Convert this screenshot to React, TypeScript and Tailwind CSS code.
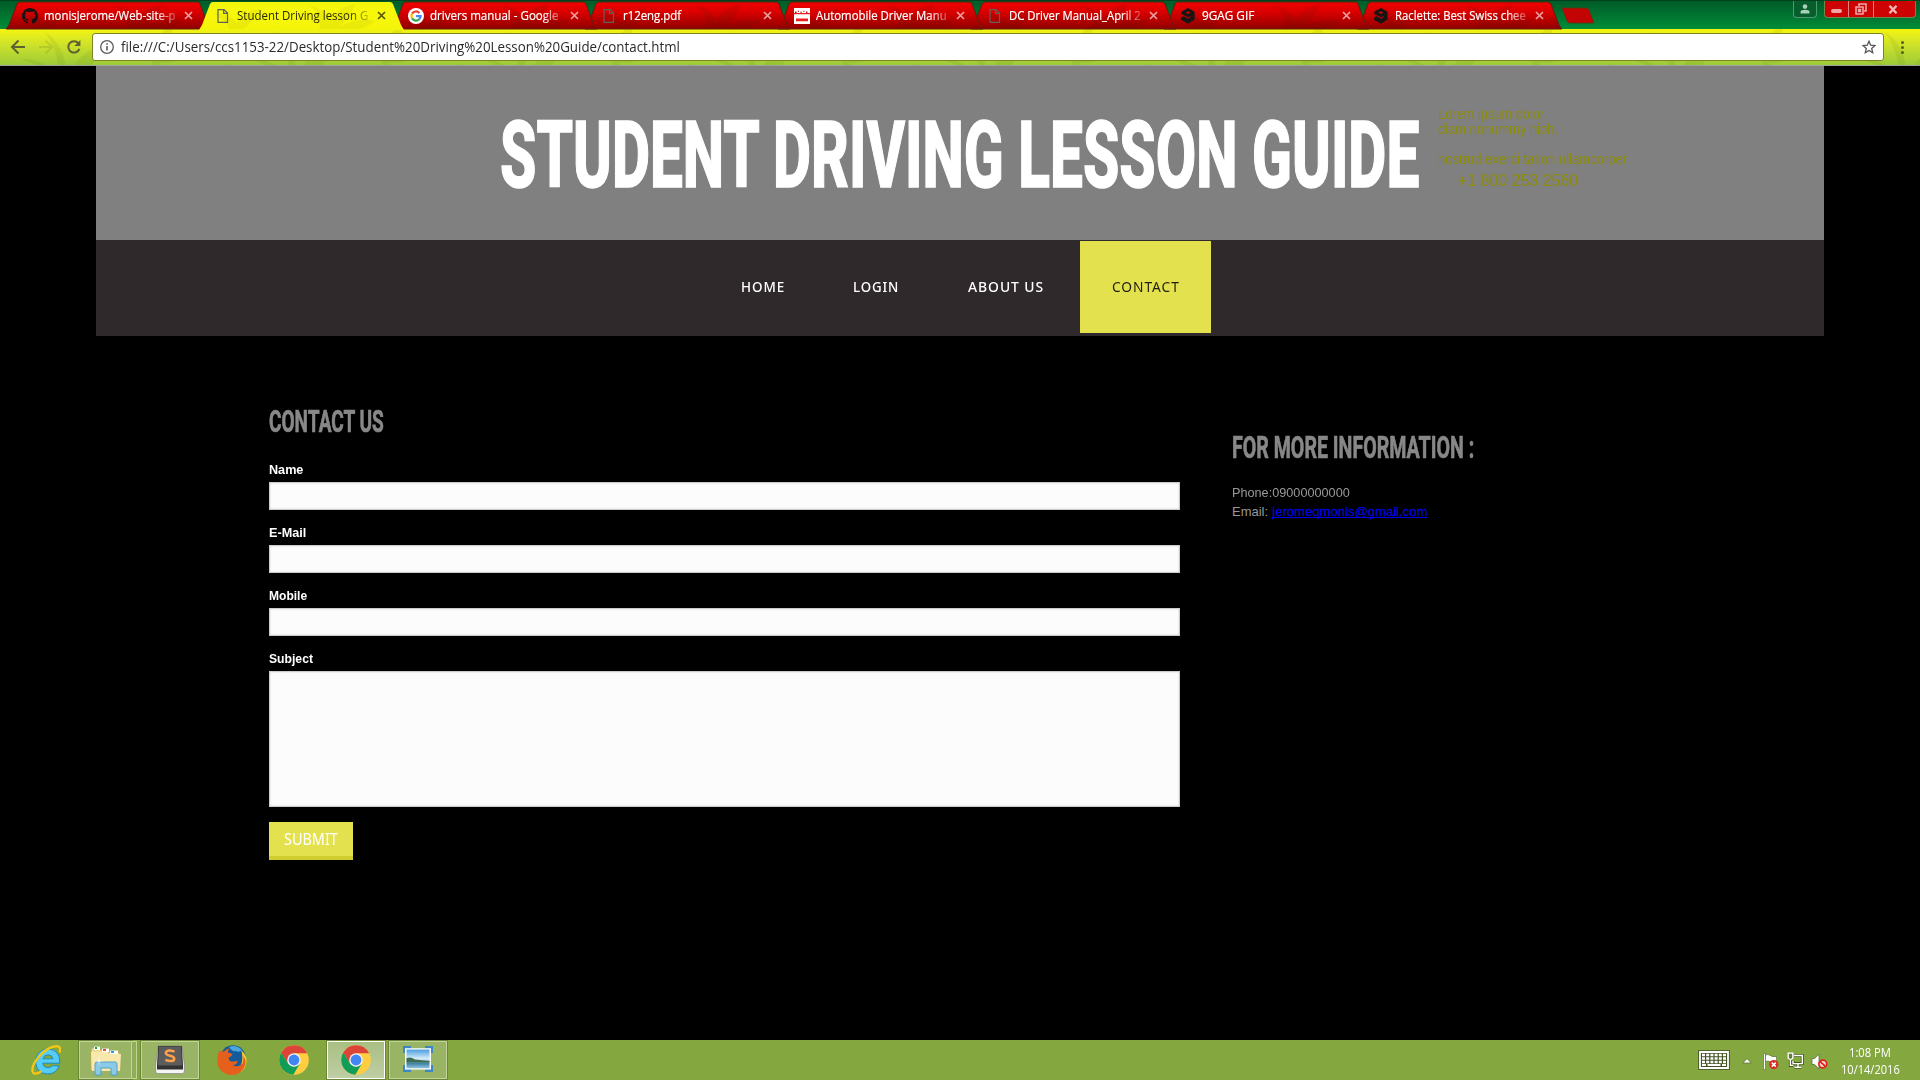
import { useLayoutEffect, useRef, useState, type ReactNode } from "react";

/** Stretches or condenses one line of text to the width of its box. */
function Fit({ className, children }: { className: string; children: ReactNode }) {
  const box = useRef<HTMLSpanElement>(null);
  const text = useRef<HTMLSpanElement>(null);
  const [scale, setScale] = useState(1);
  useLayoutEffect(() => {
    if (box.current && text.current) {
      setScale(box.current.clientWidth / text.current.offsetWidth);
    }
  }, []);
  return (
    <span ref={box} className={`block shrink-0 whitespace-nowrap ${className}`}>
      <span ref={text} className="inline-block origin-left" style={{ transform: `scaleX(${scale})` }}>
        {children}
      </span>
    </span>
  );
}

function LeafTexture({ id, opacity }: { id: string; opacity: number }) {
  return (
    <svg className="pointer-events-none absolute inset-0 h-full w-full" aria-hidden="true">
      <defs>
        <pattern id={id} width="230" height="66" patternUnits="userSpaceOnUse">
          <g fill="#3a4a00" fillOpacity={opacity}>
            <path d="M60 60Q48 38 20 30Q42 28 60 50Q58 20 44 2Q68 18 66 50Q76 24 106 14Q94 40 68 58Q98 46 122 56Q92 68 60 60Z" />
            <path d="M150 30Q142 12 120 4Q144 4 154 20Q158 4 174 -8Q172 10 160 26Q182 14 206 20Q184 34 158 34Q176 44 180 64Q160 52 150 30Z" />
            <path d="M214 66Q204 50 190 44Q208 44 218 56Q220 40 230 34Q230 52 222 66Z" />
          </g>
        </pattern>
      </defs>
      <rect width="100%" height="100%" fill={`url(#${id})`} />
    </svg>
  );
}

function GithubIcon() {
  return (
    <svg viewBox="0 0 16 16" className="h-4 w-4" fill="#1b1013">
      <path d="M8 0C3.58 0 0 3.58 0 8c0 3.54 2.29 6.53 5.47 7.59.4.07.55-.17.55-.38 0-.19-.01-.82-.01-1.49-2.01.37-2.53-.49-2.69-.94-.09-.23-.48-.94-.82-1.13-.28-.15-.68-.52-.01-.53.63-.01 1.08.58 1.23.82.72 1.21 1.87.87 2.33.66.07-.52.28-.87.51-1.07-1.78-.2-3.64-.89-3.64-3.95 0-.87.31-1.59.82-2.15-.08-.2-.36-1.02.08-2.12 0 0 .67-.21 2.2.82a7.6 7.6 0 0 1 4 0c1.53-1.04 2.2-.82 2.2-.82.44 1.1.16 1.92.08 2.12.51.56.82 1.27.82 2.15 0 3.07-1.87 3.75-3.65 3.95.29.25.54.73.54 1.48 0 1.07-.01 1.93-.01 2.2 0 .21.15.46.55.38A8.01 8.01 0 0 0 16 8c0-4.42-3.58-8-8-8z" />
    </svg>
  );
}

function FileIcon() {
  return (
    <svg viewBox="0 0 16 16" className="h-4 w-4" fill="none" stroke="#5f5f5f" strokeWidth="1.2">
      <path d="M3 1.6H9L12.5 5.1V14.4H3ZM8.6 1.6V5.4H12.5" />
    </svg>
  );
}

function GoogleIcon() {
  return (
    <svg viewBox="0 0 16 16" className="h-4 w-4">
      <circle cx="8" cy="8" r="8" fill="#fff" />
      <g fill="none" strokeWidth="2.2">
        <path d="M11.3 4.9A4.6 4.6 0 0 0 4.1 5.6" stroke="#ea4335" />
        <path d="M4.1 5.6A4.6 4.6 0 0 0 4.1 10.4" stroke="#fbbc05" />
        <path d="M4.1 10.4A4.6 4.6 0 0 0 11.1 11.4" stroke="#34a853" />
        <path d="M11.1 11.4A4.6 4.6 0 0 0 12.6 8.2H8.1" stroke="#4285f4" />
      </g>
    </svg>
  );
}

function DmvIcon() {
  return (
    <svg viewBox="0 0 16 16" className="h-4 w-4">
      <path d="M0 0H16V16H0Z" fill="#fff" />
      <path d="M0 5H16V6.2H0ZM2 10.6H14V13.2H2Z" fill="#ee1c1c" />
      <path d="M1 3.6H2.6V5H1ZM4 2.8H5V4H4ZM6.5 3.6H7.6V5H6.5ZM9.4 2.8H10.4V4H9.4ZM12 3.6H13.4V5H12Z" fill="#b81414" />
    </svg>
  );
}

function NineGagIcon() {
  return (
    <svg viewBox="0 0 16 16" className="h-4 w-4">
      <path
        d="M8 0L14.6 3.7V11.6L8 15.8L1.2 12.1V9.6L3.6 8.2L8 10.7L10.6 9.2V8L8 9.2L1.2 5.8V3.7ZM8 3.3L5.4 4.7L8 6.1L10.6 4.7Z"
        fill="#151515"
        fillRule="evenodd"
      />
    </svg>
  );
}

type TabData = {
  title: string;
  width: string;
  icon: ReactNode;
  active?: boolean;
  z: string;
  fade?: boolean;
};

const tabs: TabData[] = [
  { title: "monisjerome/Web-site-p", width: "w-[132px]", icon: <GithubIcon />, z: "z-[8]", fade: true },
  { title: "Student Driving lesson G", width: "w-[131px]", icon: <FileIcon />, active: true, z: "z-[9]", fade: true },
  { title: "drivers manual - Google", width: "w-[128px]", icon: <GoogleIcon />, z: "z-[7]", fade: true },
  { title: "r12eng.pdf", width: "w-[58px]", icon: <FileIcon />, z: "z-[6]" },
  { title: "Automobile Driver Manu", width: "w-[131px]", icon: <DmvIcon />, z: "z-[5]", fade: true },
  { title: "DC Driver Manual_April 2", width: "w-[132px]", icon: <FileIcon />, z: "z-[4]", fade: true },
  { title: "9GAG GIF", width: "w-[52px]", icon: <NineGagIcon />, z: "z-[3]" },
  { title: "Raclette: Best Swiss chee", width: "w-[131px]", icon: <NineGagIcon />, z: "z-[2]", fade: true },
];

function Tab({ tab, index }: { tab: TabData; index: number }) {
  const shape = "M0 28L3 24L11 3Q12 1 14 1H191Q193 1 194 3L202 24L205 28Z";
  return (
    <div className={`relative -mr-3 flex h-[29px] w-[205px] shrink-0 items-center pl-4 ${tab.z}`}>
      <svg className="absolute inset-0 h-[29px] w-[205px]" viewBox="0 0 205 29">
        <defs>
          <linearGradient id={`tab${index}`} x1="0" y1="0" x2="0" y2="1">
            <stop offset="0" stopColor={tab.active ? "#f4f40c" : "#f00000"} />
            <stop offset=".35" stopColor={tab.active ? "#f7f80a" : "#dc0000"} />
            <stop offset="1" stopColor={tab.active ? "#f4f40a" : "#900000"} />
          </linearGradient>
          <clipPath id={`clip${index}`}>
            <path d={shape} />
          </clipPath>
        </defs>
        <path
          d={tab.active ? "M0 29L3 24L11 3Q12 1 14 1H191Q193 1 194 3L202 24L205 29Z" : shape}
          fill={`url(#tab${index})`}
          stroke={tab.active ? "none" : "#5d2010"}
          strokeWidth="1"
        />
        <path
          clipPath={`url(#clip${index})`}
          d="M120 28Q124 14 110 4Q126 8 132 20Q138 6 156 3Q152 16 140 26Q158 16 176 20Q160 32 140 29ZM30 28Q26 18 14 12Q30 12 38 22Q46 10 60 8Q54 22 44 28Z"
          fill="#3a2000"
          opacity={tab.active ? 0.05 : 0.1}
        />
      </svg>
      <span className="relative">{tab.icon}</span>
      <span
        className={`relative ml-[6px] w-[135px] overflow-hidden ${
          tab.fade ? "[mask-image:linear-gradient(to_right,#000_112px,transparent_138px)]" : ""
        }`}
      >
        <Fit
          className={`${tab.width} text-[12px] leading-[18px] ${
            tab.active ? "text-[#2a2a00]" : "text-white [-webkit-text-stroke:0.2px_white]"
          }`}
        >
          {tab.title}
        </Fit>
      </span>
      <svg className="relative ml-[5px] h-[9px] w-[9px]" viewBox="0 0 9 9">
        <path d="M1 1L8 8M8 1L1 8" stroke={tab.active ? "#55560a" : "#e8a0a0"} strokeWidth="1.7" />
      </svg>
    </div>
  );
}

function WindowControls() {
  return (
    <div className="ml-auto flex h-[17px] pr-1">
      <div className="mr-[7px] flex w-6 items-center justify-center rounded-b border border-t-0 border-[#4f9a72] bg-[#075d2c]">
        <svg className="h-3 w-3" viewBox="0 0 12 12" fill="#a9d0b8">
          <circle cx="6" cy="3.6" r="2.3" />
          <path d="M1.6 10.5V8.4Q2 7 6 6.8Q10 7 10.4 8.4V10.5Z" />
        </svg>
      </div>
      <div className="flex w-[92px] rounded-b border border-t-0 border-[#6c8a50] bg-[#cd0202]">
        <div className="flex w-6 items-center justify-center border-r border-[#e98080]">
          <span className="mt-[3px] h-1 w-[11px] rounded-sm bg-[#f2a5a5]" />
        </div>
        <div className="flex w-[25px] items-center justify-center border-r border-[#e98080]">
          <svg className="h-3 w-3" viewBox="0 0 12 12" fill="none" stroke="#f2a5a5" strokeWidth="1.6">
            <path d="M4 3V1H11V8H9" />
            <path d="M1 4H8V11H1Z" />
            <path d="M3.6 6.6H5.4V8.4H3.6Z" />
          </svg>
        </div>
        <div className="flex grow items-center justify-center pr-1">
          <svg className="h-[9px] w-[10px]" viewBox="0 0 10 9">
            <path d="M1.5 .8L8.5 8.2M8.5 .8L1.5 8.2" stroke="#f6b5b5" strokeWidth="2.4" />
          </svg>
        </div>
      </div>
    </div>
  );
}

function Browser() {
  return (
    <header className="shrink-0 font-['Open_Sans',sans-serif]">
      <div className="flex h-[29px] border-t border-[#00401c] bg-linear-to-b from-[#005c28] to-[#008c38] pl-[6px]">
        {tabs.map((t, i) => (
          <Tab key={t.title} tab={t} index={i} />
        ))}
        <svg className="mt-[6px] ml-[11px] h-[17px] w-[34px] shrink-0" viewBox="0 0 34 17">
          <path d="M1 1H25Q27 1 28 3L33 16H9Q7 16 6 14Z" fill="#c30404" stroke="#57380f" strokeWidth=".8" />
        </svg>
        <WindowControls />
      </div>
      <div className="relative flex h-[37px] items-start border-b border-[#a0a0a0] bg-linear-to-b from-[#f4f40a] to-[#9ccb38] pt-1">
        <LeafTexture id="toolbarLeaves" opacity={0.08} />
        <svg className="relative mt-[6px] ml-[10px] h-4 w-4" viewBox="0 0 16 16" fill="none" stroke="#5f6130" strokeWidth="2">
          <path d="M15 8H2.5M8.5 1.5L2 8L8.5 14.5" />
        </svg>
        <svg className="relative mt-[6px] ml-3 h-4 w-4 opacity-15" viewBox="0 0 16 16" fill="none" stroke="#55571c" strokeWidth="2">
          <path d="M1 8H13.5M7.5 1.5L14 8L7.5 14.5" />
        </svg>
        <svg className="relative mt-[6px] ml-3 h-4 w-4" viewBox="0 0 16 16">
          <path d="M12.4 4.2A5.7 5.7 0 1 0 13.4 9.8" fill="none" stroke="#5f6130" strokeWidth="2" />
          <path d="M14.4 1V7H8.4Z" fill="#5f6130" />
        </svg>
        <div className="relative ml-[10px] flex h-7 w-[1352px] grow items-center rounded-[3px] border border-[#7c8422] bg-white">
          <svg className="ml-[7px] h-[14px] w-[14px]" viewBox="0 0 14 14" fill="none" stroke="#5a5a5a">
            <circle cx="7" cy="7" r="6.3" strokeWidth="1.3" />
            <path d="M7 6V10.6M7 3.2V4.8" strokeWidth="1.6" />
          </svg>
          <Fit className="ml-[7px] w-[559px] text-[14px] leading-5 text-[#2b2b2b]">
            file:///C:/Users/ccs1153-22/Desktop/Student%20Driving%20Lesson%20Guide/contact.html
          </Fit>
          <svg className="mr-[7px] ml-auto h-[14px] w-[14px]" viewBox="0 0 14 14">
            <path
              d="M7 1.2L8.7 5.2L13 5.6L9.7 8.4L10.7 12.7L7 10.4L3.3 12.7L4.3 8.4L1 5.6L5.3 5.2Z"
              fill="none"
              stroke="#555"
              strokeWidth="1.3"
            />
          </svg>
        </div>
        <svg className="relative mt-2 mr-[16px] ml-[17px] h-[13px] w-[3px]" viewBox="0 0 3 13" fill="#5a5c1a">
          <circle cx="1.5" cy="1.5" r="1.5" />
          <circle cx="1.5" cy="6.5" r="1.5" />
          <circle cx="1.5" cy="11.5" r="1.5" />
        </svg>
      </div>
    </header>
  );
}

function SiteHeader() {
  return (
    <div className="mx-24">
      <div className="flex h-[174px] bg-[#808080]">
        <h1 className="mt-[34px] ml-[404px]">
          <Fit className="w-[919px] font-[Roboto,sans-serif] text-[93.5px] leading-[110px] font-extrabold text-white [-webkit-text-stroke:1.5px_white]">
            STUDENT DRIVING LESSON GUIDE
          </Fit>
        </h1>
        <div className="mt-[41px] ml-[19px] font-['Liberation_Sans',sans-serif] text-[14px] leading-[15px] text-[#8b8b0c]">
          <Fit className="w-[109px]">Lorem ipsum dolor,</Fit>
          <Fit className="w-[120px]">diam nonummy nibh.</Fit>
          <Fit className="mt-[15px] w-[189px]">nostrud exerci tation ullamcorper</Fit>
          <Fit className="mt-1 ml-5 w-[120px] text-[17px] leading-[20px]">+1 800 253 2560</Fit>
        </div>
      </div>
      <nav className="flex h-24 bg-[#2f292b] pt-px pl-[645px] font-['Noto_Sans',sans-serif] text-[15px] leading-[91px] font-medium tracking-[1px] text-white">
        <Fit className="w-[44px]">HOME</Fit>
        <Fit className="ml-[68px] w-[46px]">LOGIN</Fit>
        <Fit className="ml-[69px] w-[76px]">ABOUT US</Fit>
        <div className="ml-[36px] h-[92px] w-[131px] bg-[#e4e14f] pl-8 font-normal text-[#1f1f10]">
          <Fit className="w-[68px]">CONTACT</Fit>
        </div>
      </nav>
    </div>
  );
}

const heading =
  "font-[Roboto,sans-serif] text-[32px] leading-[38px] font-bold text-[#888] [-webkit-text-stroke:0.7px_#888]";
const label = "text-[13px] leading-[15px] font-bold text-white";
const field = "block w-full resize-none border border-[#ccc] bg-[#fcfcfc] shadow-[inset_0_0_2px_#ccc] outline-none";

function Contact() {
  return (
    <main className="flex pl-[269px] font-['Liberation_Sans',sans-serif]">
      <form className="w-[911px] pt-[66px]">
        <h2>
          <Fit className={`${heading} w-[115px]`}>CONTACT US</Fit>
        </h2>
        <div className="mt-[22px] flex flex-col gap-[15px]">
          <label>
            <Fit className={`${label} mb-[5px] w-[34px]`}>Name</Fit>
            <input className={`${field} h-7`} />
          </label>
          <label>
            <Fit className={`${label} mb-[5px] w-[37px]`}>E-Mail</Fit>
            <input className={`${field} h-7`} />
          </label>
          <label>
            <Fit className={`${label} mb-[5px] w-[38px]`}>Mobile</Fit>
            <input className={`${field} h-7`} />
          </label>
          <label>
            <Fit className={`${label} mb-[5px] w-[44px]`}>Subject</Fit>
            <textarea className={`${field} h-[136px]`} />
          </label>
        </div>
        <button
          type="button"
          className="mt-[15px] block h-[38px] w-[84px] border-b-4 border-[#d0cd2e] bg-[#e4e14f] pl-[15px] text-left text-white"
        >
          <Fit className="w-[54px] font-['Noto_Sans',sans-serif] text-[15.5px] leading-[35px]">SUBMIT</Fit>
        </button>
      </form>
      <aside className="ml-[52px] pt-[92px] text-[13px] leading-[19px] text-[#999]">
        <h2>
          <Fit className={`${heading} w-[242px]`}>FOR MORE INFORMATION :</Fit>
        </h2>
        <Fit className="mt-[17px] w-[118px]">Phone:09000000000</Fit>
        <div className="flex">
          <Fit className="w-[36px]">Email:</Fit>
          <Fit className="ml-[4px] w-[155px] text-[#0000ee]">
            <a className="underline [text-decoration-skip-ink:none] [-webkit-text-stroke:0.3px_#0000ee]">
              jeromeqmonis@gmail.com
            </a>
          </Fit>
        </div>
      </aside>
    </main>
  );
}

function ChromeIcon() {
  return (
    <svg viewBox="0 0 30 30" className="h-[30px] w-[30px]">
      <circle cx="15" cy="15" r="14.8" fill="#ffcd40" />
      <path d="M15 15L15 8.2H28.2A14.8 14.8 0 0 0 2.2 7.6L8.9 18.5Z" fill="#db4437" />
      <path d="M2.2 7.6A14.8 14.8 0 0 0 14.3 29.8L20.9 18.4L15 21.8L9.1 18.4Z" fill="#0f9d58" />
      <circle cx="15" cy="15" r="6.8" fill="#f1f1f1" />
      <circle cx="15" cy="15" r="5.4" fill="#4285f4" />
    </svg>
  );
}

function IeIcon() {
  return (
    <svg viewBox="0 0 30 30" className="h-[30px] w-[30px]">
      <path
        d="M28.8 18.2H11.8Q12.4 22.6 17 22.6Q20 22.6 21.4 20.8H28.2Q25 29 16.8 29Q5.4 28.6 4.6 17Q5 5 17 4Q29.4 4.6 28.8 18.2ZM12 13.8H22Q21.2 10 17 9.8Q13 10 12 13.8Z"
        fill="#55cdf5"
        stroke="#1686bd"
        strokeWidth=".9"
      />
      <path d="M28.6 7.5Q30.5 1.6 26 1.2Q18 1 9 10.5Q0 20.5 1.6 26.5Q3 31 10.5 26.2" fill="none" stroke="#f5c518" strokeWidth="2.4" />
    </svg>
  );
}

function FolderIcon() {
  return (
    <svg viewBox="0 0 32 32" className="h-8 w-8">
      <path d="M2 4H9L10 6H17L18 8H29L30 26H1V8Z" fill="#f2dd8f" stroke="#c8a94c" strokeWidth=".8" />
      <path d="M4 2.6H10V6H4Z" fill="#fff" />
      <path d="M5 3H7V5H5Z" fill="#20a040" />
      <path d="M12 4.6H19V8H12Z" fill="#fff" />
      <path d="M13 5H16V7H13Z" fill="#e05030" />
      <path d="M20 6.6H28V10H20Z" fill="#fff" />
      <path d="M21 7H24V9H21Z" fill="#3098e0" />
      <path d="M1 8H17L19 10H31L30 27H2Z" fill="#f8e8ac" />
      <path d="M5 31V20Q5 18 7 18H25Q27 18 27 20V31H21V24H11V31Z" fill="#8ccbe8" stroke="#4d9cc4" strokeWidth=".9" />
      <path d="M9 12L9.6 16.4L14 17L9.6 17.6L9 22L8.4 17.6L4 17L8.4 16.4Z" fill="#fff" opacity=".85" />
    </svg>
  );
}

function SublimeIcon() {
  return (
    <svg viewBox="0 0 30 30" className="h-[30px] w-[30px]">
      <path d="M.6 20L3 1H27L29.4 20V26Q29.4 28.6 27 28.6H3Q.6 28.6 .6 26Z" fill="#f4f4f4" stroke="#777" strokeWidth=".6" />
      <path d="M3.2 1H26.8L28 20V24.4H2V20Z" fill="#333" />
      <path d="M4 1.6H26L27 20.4H3Z" fill="#5c5c5c" />
      <path d="M19.6 6.6Q11 4 10.8 8Q11 10 15 10.8Q19.4 11.8 19.2 14Q18.6 17.6 10.4 15" fill="none" stroke="#ffa04a" strokeWidth="2.5" />
    </svg>
  );
}

function FirefoxIcon() {
  return (
    <svg viewBox="0 0 30 30" className="h-[30px] w-[30px]">
      <circle cx="16" cy="13" r="12.8" fill="#155a9c" />
      <path d="M12 2Q19 -1 25 5Q22 8 19 6Q15 7 12 2Z" fill="#4aa6dd" />
      <path d="M24 5Q30 10 29.6 17Q28 28 16 29.8Q23 24 25 17Q26 10 24 5Z" fill="#f9c62c" />
      <path
        d="M2.6 5Q4 7 7 6.4Q9.4 3.4 12.6 3.4Q10.8 5.4 11 7.6L15.6 9Q15 11.4 11.8 12.4Q11 15 14 16.4Q18 17 20.6 15.4Q20 20 15.6 20.2Q20 23 25.6 18.6Q27 14 26 11Q30 15 27.8 21Q24 30 14.6 30Q4 29.6 .8 20Q-.6 11 2.6 5Z"
        fill="#e4601c"
      />
    </svg>
  );
}

function PhotoIcon() {
  return (
    <svg viewBox="0 0 30 26" className="h-[26px] w-[30px]">
      <defs>
        <linearGradient id="sky" x1="0" y1="0" x2="0" y2="1">
          <stop offset="0" stopColor="#4a9fe0" />
          <stop offset=".5" stopColor="#d9eef8" />
          <stop offset=".75" stopColor="#3f86a8" />
          <stop offset="1" stopColor="#8fc4dc" />
        </linearGradient>
      </defs>
      <path d="M0 0H8V7H0ZM22 0H30V7H22ZM0 19H8V26H0ZM22 19H30V26H22Z" fill="#3f86c4" />
      <path d="M2 2.2H28V23.6H2Z" fill="#f7fafc" />
      <path d="M3.5 3.6H26.5V22.2H3.5Z" fill="url(#sky)" />
      <path d="M3.5 12Q8 10.6 12 13.6Q18 14.4 26.5 15V16.4H3.5Z" fill="#3f6b52" />
    </svg>
  );
}

const frame = "flex h-[38px] items-center justify-center border border-[#c2d39d] bg-[#98b464] outline outline-[#6b8733]";

function Taskbar() {
  return (
    <footer className="flex h-10 shrink-0 items-center overflow-hidden bg-[#84a83f] font-['Open_Sans',sans-serif]">
      <div className="mr-[18px] ml-[31px]">
        <IeIcon />
      </div>
      <div className={`${frame} w-[53px]`}>
        <FolderIcon />
      </div>
      <div className="mr-1 h-[38px] w-[5px] border border-l-0 border-[#c2d39d] bg-[#90ad58]" />
      <div className={`${frame} w-[58px]`}>
        <SublimeIcon />
      </div>
      <div className="ml-[18px]">
        <FirefoxIcon />
      </div>
      <div className="mr-[18px] ml-8">
        <ChromeIcon />
      </div>
      <div className="flex h-[38px] w-[58px] items-center justify-center border border-white bg-linear-to-b from-[#a9bf82] to-[#bfcea4] outline outline-[#6b8733]">
        <ChromeIcon />
      </div>
      <div className={`${frame} ml-1 w-[58px] pb-[3px]`}>
        <PhotoIcon />
      </div>
      <svg className="ml-auto h-[20px] w-[32px]" viewBox="0 0 32 20">
        <path d="M1.5 1.5H30.5V18.5H1.5Z" fill="none" stroke="#4d642a" strokeWidth="3" />
        <path d="M2 2H30V18H2Z" fill="#415323" stroke="#fff" strokeWidth="1.8" />
        <path d="M4 5H28M4 8.5H28M4 12H28" stroke="#fff" strokeWidth="2.4" strokeDasharray="3 1.2" />
        <path d="M4 15H8M9.5 15H22.5M24 15H28" stroke="#fff" strokeWidth="2" />
      </svg>
      <svg className="mt-[2px] ml-[12px] h-[6px] w-[10px]" viewBox="0 0 10 6">
        <path d="M5 .6L9.2 5H.8Z" fill="#fff" stroke="#50682b" strokeWidth=".7" />
      </svg>
      <svg className="mt-[2px] ml-[10px] h-[17px] w-[17px]" viewBox="0 0 17 17">
        <path d="M1.5 .5H3.5V16.5H1.5Z" fill="#fff" stroke="#4d642a" strokeWidth=".6" />
        <path d="M3.5 2Q6 .8 8 2.4Q10.5 4.4 14.5 3.4V9.6Q11 10.6 8.4 8.8Q6 7.4 3.5 8.6Z" fill="#fff" stroke="#4d642a" strokeWidth=".6" />
        <circle cx="11.8" cy="11.6" r="4.6" fill="#dc2820" />
        <path d="M9.8 9.6L13.8 13.6M13.8 9.6L9.8 13.6" stroke="#fff" strokeWidth="1.5" />
      </svg>
      <svg className="ml-[8px] h-[17px] w-[17px]" viewBox="0 0 17 17" fill="none">
        <path d="M7 3.5H15.3V11.6H6V9M11 12V15M7.5 15.2H14.5M3.4 6V13.4H6" stroke="#43591f" strokeWidth="3" />
        <path d="M7 3.5H15.3V11.6H6V9M11 12V15M7.5 15.2H14.5M3.4 6V13.4H6" stroke="#fff" strokeWidth="1.4" />
        <path d="M1.2 1.2H5.8V6.2L3.5 7.8L1.2 6.2Z" fill="#627e35" stroke="#fff" strokeWidth="1.3" />
      </svg>
      <svg className="mt-[2px] ml-[7px] h-[17px] w-[17px]" viewBox="0 0 17 17">
        <path d="M1 5.5H3.6L8 1.2V15.8L3.6 11.5H1Z" fill="#fff" stroke="#4d642a" strokeWidth=".7" />
        <circle cx="11.8" cy="11" r="3.9" fill="#f4dcd4" stroke="#e0201c" strokeWidth="1.7" />
        <path d="M9 8.4L14.6 13.6" stroke="#e0201c" strokeWidth="1.8" />
      </svg>
      <div className="mt-[1px] mr-5 ml-[12px] flex w-[60px] flex-col items-center text-[12px] leading-[17px] text-white">
        <Fit className="w-[42px]">1:08 PM</Fit>
        <Fit className="w-[59px]">10/14/2016</Fit>
      </div>
    </footer>
  );
}

export default function App() {
  return (
    <div className="flex h-[1080px] w-[1920px] flex-col overflow-hidden bg-black">
      <Browser />
      <div className="grow">
        <SiteHeader />
        <Contact />
      </div>
      <Taskbar />
    </div>
  );
}
